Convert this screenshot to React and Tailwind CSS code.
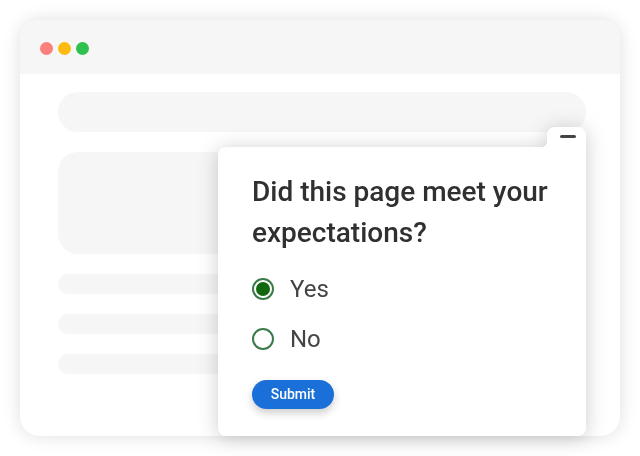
import { useState } from 'react'

function Radio({ checked, label, onSelect }) {
  return (
    <button type="button" onClick={onSelect} className="flex h-[30px] items-center gap-4 text-left">
      <span className="flex h-[22px] w-[22px] shrink-0 items-center justify-center rounded-full border-2 border-[#3b7a4a] bg-white">
        {checked ? <span className="h-[14px] w-[14px] rounded-full bg-[#13680f]" /> : null}
      </span>
      <span className="text-[24px] leading-[30px] text-[#444444]">{label}</span>
    </button>
  )
}

export default function App() {
  const [answer, setAnswer] = useState('yes')
  const lines = ['a', 'b', 'c']

  return (
    <div className="h-[456px] w-[640px] bg-white p-5 font-['Roboto',sans-serif]">
      <div className="relative h-[416px] w-[600px] rounded-[20px] bg-white shadow-[0_0_18px_rgba(0,0,0,0.13)]">
        <div className="flex h-[54px] items-center gap-[5px] rounded-t-[20px] bg-[#f6f6f6] px-5 pt-[2px]">
          <span className="h-[13px] w-[13px] rounded-full bg-[#fb7f7a]" />
          <span className="h-[13px] w-[13px] rounded-full bg-[#fdbb12]" />
          <span className="h-[13px] w-[13px] rounded-full bg-[#2fc150]" />
        </div>

        <div className="flex flex-col gap-5 pl-[38px] pr-[34px] pt-[18px]">
          <div className="h-10 rounded-full bg-[#f6f6f6]" />
          <div className="h-[102px] rounded-[20px] bg-[#f6f6f6]" />
          {lines.map((key) => (
            <div key={key} className="h-5 rounded-full bg-[#f6f6f6]" />
          ))}
        </div>

        <div className="absolute left-[198px] top-[127px] w-[368px] drop-shadow-[0_2px_10px_rgba(0,0,0,0.2)]">
          <div className="absolute bottom-full right-0 h-5 w-[39px] rounded-t-[8px] bg-white pl-[13px] pt-2">
            <div className="h-[3px] w-4 rounded-full bg-[#444444]" />
          </div>
          <div className="absolute bottom-full right-[39px] h-[6px] w-[6px] bg-[radial-gradient(circle_at_0_0,transparent_6px,white_6.5px)]" />
          <div className="flex h-[289px] flex-col rounded-b-[8px] rounded-tl-[8px] bg-white px-[34px] pt-[24px]">
            <h2 className="text-[28px] font-medium leading-[41px] text-[#303030]">
              Did this page meet your expectations?
            </h2>
            <div className="mt-[21px] flex flex-col gap-5">
              <Radio checked={answer === 'yes'} label="Yes" onSelect={() => setAnswer('yes')} />
              <Radio checked={answer === 'no'} label="No" onSelect={() => setAnswer('no')} />
            </div>
            <button
              type="button"
              className="mt-[26px] h-[29px] w-[82px] rounded-full bg-[#1a70d8] text-[14px] font-medium text-white shadow-[0_4px_8px_rgba(0,0,0,0.2)]"
            >
              Submit
            </button>
          </div>
        </div>
      </div>
    </div>
  )
}
